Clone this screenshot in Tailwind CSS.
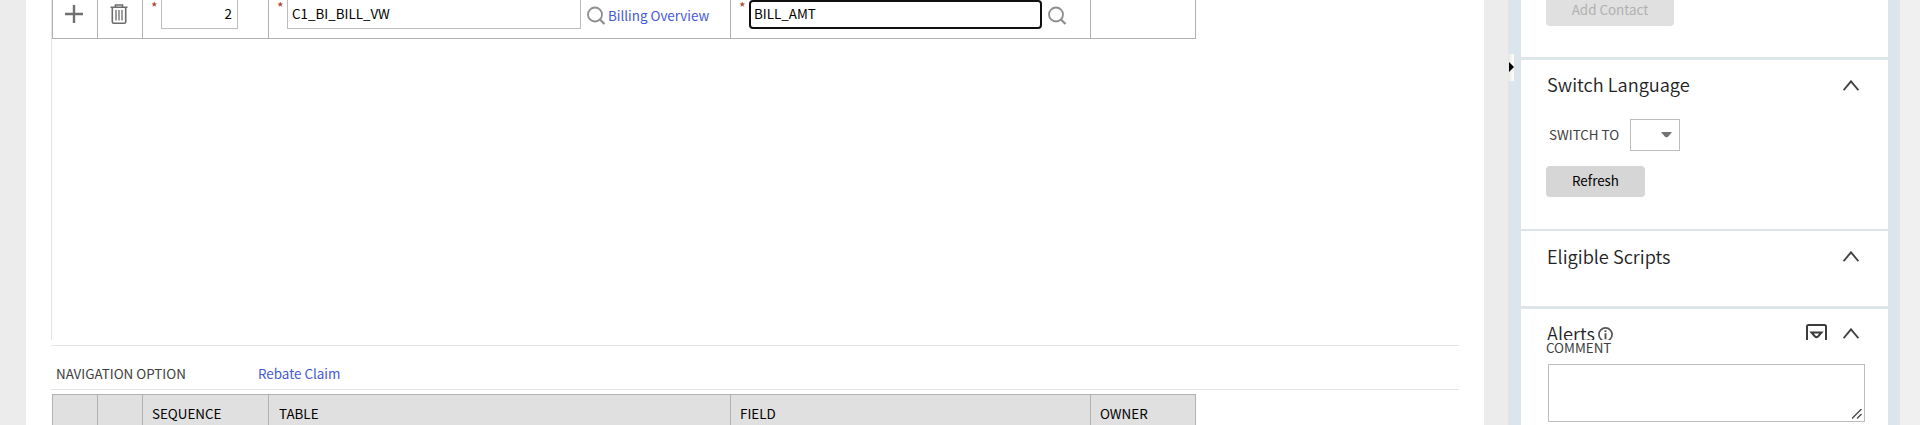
<!DOCTYPE html>
<html lang="en">
<head>
<meta charset="utf-8">
<title>Navigation Option</title>
<script src="https://cdn.jsdelivr.net/npm/@tailwindcss/browser@4"></script>
</head>
<body class="w-[1920px] h-[425px] overflow-hidden bg-[#ececec] font-['Noto_Sans_CJK_SC',sans-serif] text-[13.4px] leading-5 text-black">
<div class="flex h-[425px] whitespace-nowrap">
  <main class="ml-[26px] w-[1458px] shrink-0 bg-white pl-[25px]">
    <section class="h-[340px] border-l border-[#e5e5e5]">
      <div class="flex h-[39px] w-[1144px] border-b border-l border-[#b1b1b1]">
        <div class="w-[45px] border-r border-[#b1b1b1] pl-3 pt-[5px]">
          <svg width="18" height="18" viewBox="0 0 18 18" stroke="#707070" stroke-width="2.4"><path d="M9 0v18M0 9h18"/></svg>
        </div>
        <div class="w-[45px] border-r border-[#b1b1b1] pl-3 pt-1">
          <svg width="18" height="20" viewBox="0 0 18 20" fill="none" stroke="#6c6c6c" stroke-width="1.6"><path d="M.5 3.3h17M5.5 3V1h7v2M2.3 3.500v14.200q0 1.500 1.500 1.500h10.400q1.500 0 1.500-1.500V3.500"/><path d="M6 6v10.500M9 6v10.500M12 6v10.500" stroke-width="1.300"/></svg>
        </div>
        <div class="flex w-[126px] border-r border-[#b1b1b1]">
          <span class="-mt-[3px] w-[18px] pl-2 text-[14px] text-[#a33a1c]">*</span>
          <div class="h-[29px] w-[77px] border border-t-0 border-[#bdbdbd] pr-[5px] pt-[3px] text-right">2</div>
        </div>
        <div class="flex w-[462px] border-r border-[#b1b1b1]">
          <span class="-mt-[3px] w-[18px] pl-2 text-[14px] text-[#a33a1c]">*</span>
          <div class="h-[29px] w-[294px] border border-t-0 border-[#bdbdbd] pl-1 pt-[3px]">C1_BI_BILL_VW</div>
          <svg class="ml-1.5 mt-[6px]" width="19" height="19" viewBox="0 0 19 19" fill="none" stroke="#8e8e8e" stroke-width="1.800"><circle cx="8" cy="8.500" r="7"/><path d="M12.500 13l5 5" stroke-width="2.200"/></svg>
          <a class="ml-[2px] pt-[5px] text-[#4359d6]">Billing Overview</a>
        </div>
        <div class="flex w-[360px] border-r border-[#b1b1b1]">
          <span class="-mt-[3px] w-[18px] pl-2 text-[14px] text-[#a33a1c]">*</span>
          <div class="h-[29px] w-[293px] rounded border-2 border-[#101010] pl-[3px] pt-px">BILL_AMT</div>
          <svg class="ml-1.5 mt-[6px]" width="19" height="19" viewBox="0 0 19 19" fill="none" stroke="#8e8e8e" stroke-width="1.800"><circle cx="8" cy="8.500" r="7"/><path d="M12.500 13l5 5" stroke-width="2.200"/></svg>
        </div>
        <div class="w-[105px] border-r border-[#b1b1b1]"></div>
      </div>
    </section>
    <div class="mt-[5px] flex h-[45px] w-[1408px] border-y border-[#e5e5e5] pl-[5px] pt-[17px]">
      <span class="w-[202px] text-[#404040]">NAVIGATION OPTION</span>
      <a class="text-[#4359d6]">Rebate Claim</a>
    </div>
    <div class="mt-1 ml-px flex h-[31px] w-[1144px] border-l border-t border-[#b1b1b1] bg-[#e0e0e0]">
      <div class="w-[45px] border-r border-[#b1b1b1]"></div>
      <div class="w-[45px] border-r border-[#b1b1b1]"></div>
      <div class="w-[126px] border-r border-[#b1b1b1] pl-[9px] pt-2">SEQUENCE</div>
      <div class="w-[462px] border-r border-[#b1b1b1] pl-[10px] pt-2">TABLE</div>
      <div class="w-[360px] border-r border-[#b1b1b1] pl-[9px] pt-2">FIELD</div>
      <div class="w-[105px] border-r border-[#b1b1b1] pl-[9px] pt-2">OWNER</div>
    </div>
  </main>
  <aside class="ml-6 flex w-[392px] shrink-0 bg-[#dce5ec]">
    <div class="w-[13px] pt-[54px]">
      <div class="flex h-[27px] w-1.5 items-center bg-gradient-to-r from-[#e7e7df] to-white pl-px">
        <svg width="5" height="10" viewBox="0 0 5 10" class="-mt-px"><path d="M0 0l5 5-5 5z"/></svg>
      </div>
    </div>
    <div class="w-[367px] shrink-0 bg-white">
      <section class="h-[60px] border-b-[3px] border-[#dce5ea] pl-[25px]">
        <div class="h-[26px] w-32 rounded-b-sm bg-[#e0e0e0] text-center leading-[18px] text-[#b0b0b0]">Add Contact</div>
      </section>
      <section class="h-[171px] border-b-2 border-[#dce5ea] pl-[25px] pt-3">
        <div class="flex h-[47px] pl-px">
          <h2 class="w-[296px] text-[18.2px] font-[350] leading-6 text-[#222]">Switch Language</h2>
          <svg class="mt-2" width="16" height="11" viewBox="0 0 16 11" fill="none" stroke="#444" stroke-width="1.900"><path d="M.6 10.200L8 1.300l7.400 8.900"/></svg>
        </div>
        <div class="flex h-[47px] pl-[3px]">
          <span class="w-[81px] pt-[5px] text-[#404040]">SWITCH TO</span>
          <div class="h-8 w-[50px] border border-[#bdbdbd] pl-[30px] pt-[12px]">
            <svg width="11" height="6" viewBox="0 0 11 6"><path d="M0 0h11L7 4.800q-1.500 1-3 0z" fill="#737373"/></svg>
          </div>
        </div>
        <div class="h-[31px] w-[99px] rounded bg-[#d6d6d6] pt-1 text-center">Refresh</div>
      </section>
      <section class="flex h-[78px] border-b-[3px] border-[#dce5ea] pl-[26px] pt-[13px]">
        <h2 class="w-[296px] text-[18.2px] font-[350] leading-6 text-[#222]">Eligible Scripts</h2>
        <svg class="mt-[7px]" width="16" height="11" viewBox="0 0 16 11" fill="none" stroke="#444" stroke-width="1.900"><path d="M.6 10.200L8 1.300l7.400 8.900"/></svg>
      </section>
      <section class="pl-[25px]">
        <div class="flex h-[31px] overflow-hidden pl-px pt-3">
          <h2 class="w-[51px] text-[18.2px] font-[350] leading-6 text-[#222]">Alerts</h2>
          <svg class="mt-1.5 shrink-0" width="15" height="15" viewBox="0 0 15 15" fill="none" stroke="#555" stroke-width="1.700"><circle cx="7.500" cy="7.500" r="6.600"/><path d="M7.500 6.300v6M7.500 3.200v1.800" stroke-width="1.900"/></svg>
          <svg class="ml-[193px] mt-[3px] shrink-0" width="21" height="20" viewBox="0 0 21 20" fill="none" stroke="#3c3c3c" stroke-width="2"><rect x="1" y="1" width="19" height="18" rx="1.500"/><path d="M5.500 8.500h10L12 12.500q-1.500 1.300-3 0z"/></svg>
          <svg class="ml-4 mt-[7px] shrink-0" width="16" height="11" viewBox="0 0 16 11" fill="none" stroke="#444" stroke-width="1.900"><path d="M.6 10.200L8 1.300l7.400 8.900"/></svg>
        </div>
        <div class="h-6 leading-[14px] text-[#404040]">COMMENT</div>
        <div class="ml-0.5 flex h-[58px] w-[317px] items-end justify-end border border-[#bdbdbd] p-0.5">
          <svg width="10" height="10" viewBox="0 0 10 10" stroke="#444" stroke-width="1.300"><path d="M0 9.500L9.500 0M5 9.500l4.500-4.500"/></svg>
        </div>
      </section>
    </div>
  </aside>
  <div class="w-5 bg-[#f0f0f0]"></div>
</div>
</body>
</html>
